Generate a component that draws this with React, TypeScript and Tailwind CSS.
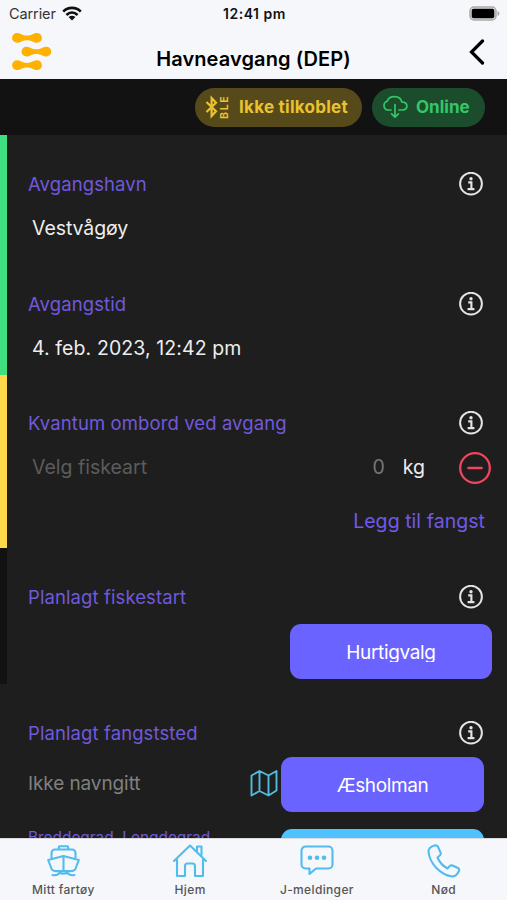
import type { ReactNode } from "react";
import { clsx } from "clsx";

interface SectionProps {
  title: string;
  className: string;
  children?: ReactNode;
}

function InfoIcon() {
  return (
    <svg viewBox="0 0 24 24" className="size-6 shrink-0 text-[#e4e4e4]" fill="none" stroke="currentColor">
      <circle cx="12" cy="11.700" r="10.900" strokeWidth="2" />
      <circle cx="12" cy="6.700" r="1.700" fill="currentColor" stroke="none" />
      <path d="M9.200 10.400h3.200v6.600M8.600 17.100h6.800" strokeWidth="2.100" />
    </svg>
  );
}

function LogoIcon() {
  return (
    <svg viewBox="0 0 40 38" className="h-[38px] w-10 text-[#ffb100]" fill="currentColor">
      {[
        [0, 0],
        [9.4, 13.7],
        [0, 27.3],
      ].map(([x, y]) => (
        <path
          key={y}
          transform={`translate(${x} ${y})`}
          d="M5 0C8.500 0 10 2.600 15 2.600S21.500 0 25 0a4.900 4.900 0 0 1 0 9.800C21.500 9.800 20 7.200 15 7.200S8.500 9.800 5 9.800A4.900 4.900 0 0 1 5 0Z"
        />
      ))}
    </svg>
  );
}

function StatusBar() {
  return (
    <div className="flex h-7 items-center justify-between pr-[7px] pl-[9px] text-[#111]">
      <div className="flex w-[120px] items-center gap-[6px]">
        <span className="text-[14.500px] tracking-[-0.1px] text-[#333]">Carrier</span>
        <svg viewBox="0 0 20 15" className="-mt-[2px] h-[15px] w-5" fill="none" stroke="currentColor" strokeWidth="2.700">
          <path d="M1.200 5.600c5-4.900 12.600-4.900 17.600 0M4.400 9c3.300-3.100 7.900-3.100 11.200 0" />
          <path d="M6.600 11.100c2-1.800 4.800-1.800 6.800 0L10 14.600Z" fill="currentColor" stroke="none" />
        </svg>
      </div>
      <span className="pb-[2px] text-[14px] font-semibold tracking-[0.500px]">12:41 pm</span>
      <div className="flex w-[120px] justify-end">
        <svg viewBox="0 0 31 15" className="-mt-[2px] h-[15px] w-[31px]">
          <rect x="1" y="1" width="26" height="13" rx="4" fill="#ddd" stroke="#aaa" strokeWidth="1.500" />
          <rect x="2.700" y="2.700" width="22.600" height="9.600" rx="2" fill="#000" />
          <path d="M28.500 5c2.500 1 2.500 4 0 5Z" fill="#aaa" />
        </svg>
      </div>
    </div>
  );
}

function Header() {
  return (
    <header className="flex h-[79px] shrink-0 flex-col bg-[#f5f7fb]">
      <StatusBar />
      <div className="flex flex-1 items-start justify-between pr-[22px] pl-3">
        <div className="w-[40px] pt-[5px]">
          <LogoIcon />
        </div>
        <h1 className="pt-[17px] text-[20px] leading-7 font-semibold tracking-[0.100px] text-black">
          Havneavgang (DEP)
        </h1>
        <div className="flex w-[30px] justify-end pt-[11px]">
          <svg viewBox="0 0 16 26" className="h-[26px] w-4" fill="none" stroke="#000" strokeWidth="3.200" strokeLinecap="round">
            <path d="M13.500 2 2.500 13l11 11" />
          </svg>
        </div>
      </div>
    </header>
  );
}

function ConnectionBar() {
  return (
    <div className="flex h-14 shrink-0 items-center justify-end gap-[10px] bg-[#121212] pr-[22px] text-[17px] font-bold">
      <div className="flex h-[39px] w-[167px] items-center rounded-full bg-[#574a1a] pl-[10px] text-[#e8c32f]">
        <svg viewBox="0 0 13 24" className="h-6 w-[13px]" fill="none" stroke="currentColor" strokeWidth="2.200">
          <path d="M1.500 7 11 16.200 6.600 21V3L11 7.800 1.500 17" />
        </svg>
        <span className="mr-[8px] ml-[1px] h-[26px] w-3 rotate-180 text-center text-[10.500px] leading-3 tracking-[1.700px] [writing-mode:vertical-rl]">
          BLE
        </span>
        <span className="pt-[2px] tracking-[0.260px]">Ikke tilkoblet</span>
      </div>
      <div className="flex h-[39px] w-[113px] items-center gap-[8px] rounded-full bg-[#1b4d2d] pl-[10px] text-[#34c768]">
        <svg viewBox="0 0 26 24" className="h-6 w-[26px]" fill="none" stroke="currentColor" strokeWidth="1.700" strokeLinecap="round" strokeLinejoin="round">
          <path d="M9 15H5.500a4.500 4.500 0 0 1-.3-8.700C6 3.500 9 1.600 12.500 1.600c4 0 6.700 2.400 7.200 5.300 3 .2 5.200 1.700 5.200 4.200 0 2.400-2 3.900-4.400 3.900H17M13 9.500V22M9.600 18.800 13 22.200l3.400-3.400" />
        </svg>
        <span className="pt-[2px]">Online</span>
      </div>
    </div>
  );
}

function Section({ title, className, children }: SectionProps) {
  return (
    <section className={clsx("shrink-0 border-l-[7px] pl-[21px]", className)}>
      <div className="flex h-6 items-center justify-between pr-6">
        <h2 className="pt-[1px] text-[18.500px] tracking-[0.100px] text-[#7059dc]">{title}</h2>
        <InfoIcon />
      </div>
      {children}
    </section>
  );
}

function TabItem({ label, children }: { label: string; children: ReactNode }) {
  return (
    <div className="flex flex-1 flex-col items-center pt-[5px]">
      <svg
        viewBox="0 0 34 34"
        className="size-[34px] text-[#52bcef]"
        fill="none"
        stroke="currentColor"
        strokeWidth="2.100"
        strokeLinecap="round"
        strokeLinejoin="round"
      >
        {children}
      </svg>
      <span className="mt-[4px] text-[12px] leading-4 font-medium tracking-[0.350px] text-[#555]">{label}</span>
    </div>
  );
}

export default function App() {
  return (
    <div className="flex h-[900px] w-[507px] flex-col overflow-hidden bg-[#1e1e1e] font-[Inter,sans-serif]">
      <Header />
      <ConnectionBar />

      <main className="flex min-h-0 flex-1 flex-col overflow-hidden">
        <Section title="Avgangshavn" className="h-[120px] border-[#40e080] pt-[37px]">
          <p className="mt-[18px] pl-1 text-[19.500px] leading-7 tracking-[-0.080px] text-[#ededed]">Vestvågøy</p>
        </Section>
        <Section title="Avgangstid" className="h-[120px] border-[#40e080] pt-[37px]">
          <p className="mt-[18px] pl-1 text-[19.500px] leading-7 tracking-[0.100px] text-[#ededed]">4. feb. 2023, 12:42 pm</p>
        </Section>

        <Section title="Kvantum ombord ved avgang" className="h-[173px] border-[#ffd84b] pt-9">
          <div className="mt-[16px] flex h-8 items-center pr-4 pl-1 text-[19.500px]">
            <span className="flex-1 pt-[2px] text-[#5c5c5c]">Velg fiskeart</span>
            <span className="mr-[18px] pt-[2px] text-[#777]">0</span>
            <span className="mr-[34px] pt-[2px] text-[#ededed]">kg</span>
            <svg viewBox="0 0 32 32" className="mt-[1px] size-8" fill="none" stroke="#ef4560" strokeWidth="2.300">
              <circle cx="16" cy="16" r="14.800" />
              <path d="M9.500 16h13" strokeWidth="2.700" strokeLinecap="round" />
            </svg>
          </div>
          <p className="mt-[24px] pr-[22px] text-right text-[19.500px] leading-7 tracking-[0.050px] text-[#7059e8]">Legg til fangst</p>
        </Section>

        <Section title="Planlagt fiskestart" className="h-[136px] border-[#121212] pt-[37px]">
          <div className="mt-[15px] flex justify-end pr-[15px]">
            <button className="flex h-[55px] w-[202px] items-center justify-center rounded-[11px] bg-[#6b63ff] text-[19px] tracking-[-0.350px] text-white">
              <span className="mt-[1px] h-[19px] overflow-hidden leading-[19px]">Hurtigvalg</span>
            </button>
          </div>
        </Section>

        <Section title="Planlagt fangststed" className="border-transparent pt-[37px]">
          <div className="mt-[12px] flex items-center pr-[23px]">
            <span className="flex-1 text-[19px] tracking-[-0.100px] text-[#808080]">Ikke navngitt</span>
            <svg viewBox="0 0 28 28" className="mr-[3px] mb-1 size-7" fill="none" stroke="#52bcdf" strokeWidth="1.900" strokeLinejoin="round">
              <path d="M1.500 6.500 9.500 2l9 4.500L26.500 2v19.500l-8 5-9-4.500-8 4.500ZM9.500 2v20M18.500 6.500v20" />
            </svg>
            <button className="h-[55px] w-[203px] rounded-[11px] bg-[#6b63ff] pt-[3px] text-[19px] tracking-[-0.400px] text-white">
              Æsholman
            </button>
          </div>
          <div className="mt-[17px] flex justify-between pr-[23px]">
            <span className="text-[15.500px] leading-[18px] tracking-[-0.070px] text-[#7059dc]">Breddegrad, Lengdegrad</span>
            <div className="h-[55px] w-[203px] rounded-[11px] bg-[#4fc3ff]" />
          </div>
        </Section>
      </main>

      <nav className="flex h-[62px] shrink-0 border-t border-[#d8dadd] bg-[#f5f7fb]">
        <TabItem label="Mitt fartøy">
          <path d="M5.500 13.500V9a3.500 3.500 0 0 1 3.500-3.500h17A3.500 3.500 0 0 1 29.500 9v4.500M12.800 5.300V3.300a1 1 0 0 1 1-1h7.400a1 1 0 0 1 1 1v2M17.500 12 2.200 16l3.600 9.500c1.200 1 2.700 1.600 4.200 1.600h15c1.500 0 3-.6 4.200-1.600L32.800 16ZM17.500 12v15M6.500 31c3 .8 5.200 0 7.200-2 2.600 1 5 1 7.600 0 2 2 4.200 2.800 7.200 2" />
        </TabItem>
        <TabItem label="Hjem">
          <path d="M1 17 17 1.500 33 17M4 15v17h8V22a2.500 2.500 0 0 1 2.500-2.500h5A2.500 2.500 0 0 1 22 22v10h8V15M24 7V2.500h4.500V11" />
        </TabItem>
        <TabItem label="J-meldinger">
          <path d="M5.500 2.500h23a4 4 0 0 1 4 4v14a4 4 0 0 1-4 4H16L9.500 30v-5.500h-4a4 4 0 0 1-4-4v-14a4 4 0 0 1 4-4Z" />
          <g fill="currentColor" stroke="none">
            <circle cx="10" cy="13.800" r="2.300" />
            <circle cx="17" cy="13.800" r="2.300" />
            <circle cx="24" cy="13.800" r="2.300" />
          </g>
        </TabItem>
        <TabItem label="Nød">
          <path d="M7.500 1.500C4 2.500 1.500 4.500 1.500 7.500 2.500 19.500 13.500 31 25.500 32.500c3 0 5-2.500 6.500-5.500.5-1.500 0-2.500-1-3l-5.500-2.500c-1-.5-2-.2-3 .8l-2 2.200C16 22 12.500 18.500 10.500 13.500l2.500-2.200c.8-.8 1-1.600.6-2.700L11 2.800C10.300 1.500 9.200 1 7.500 1.500Z" />
        </TabItem>
      </nav>
    </div>
  );
}
